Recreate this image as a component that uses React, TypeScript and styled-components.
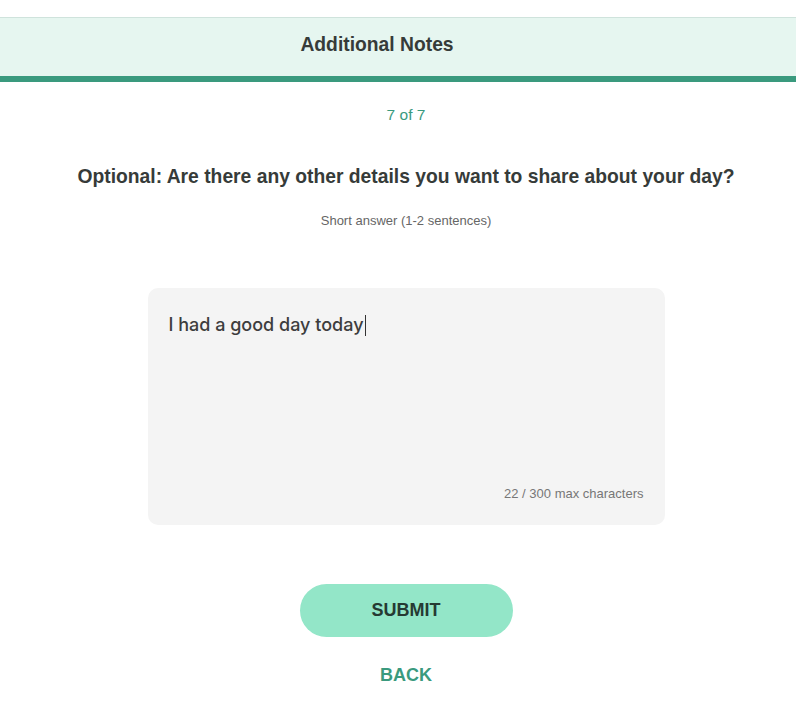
import React from "react";
import styled, { createGlobalStyle } from "styled-components";

const Global = createGlobalStyle`
  html, body { margin: 0; padding: 0; background: #ffffff; }
  body { font-family: "Liberation Sans", Arial, sans-serif; }
`;

const Page = styled.div`
  width: 796px;
  min-height: 714px;
  display: flex;
  flex-direction: column;
  padding-top: 17px;
  box-sizing: border-box;
`;

const Header = styled.header`
  height: 53px;
  background: #e6f6f0;
  border-top: 1px solid #cfe3dc;
  border-bottom: 6px solid #3a9a7e;
  display: flex;
  align-items: center;
  justify-content: center;
  padding: 0 42px 5px 0;
  box-sizing: content-box;
`;

const HeaderTitle = styled.h1`
  margin: 0;
  font-size: 19.3px;
  font-weight: 700;
  color: #363b39;
`;

const Content = styled.main`
  display: flex;
  flex-direction: column;
  align-items: center;
  padding-left: 16px;
`;

const Step = styled.div`
  margin-top: 24px;
  font-size: 15.5px;
  line-height: 18px;
  color: #3a9a7e;
`;

const Question = styled.h2`
  margin: 42px 0 0;
  font-size: 19.3px;
  line-height: 22px;
  font-weight: 700;
  color: #363b39;
`;

const Hint = styled.p`
  margin: 25px 0 0;
  font-size: 13px;
  line-height: 15px;
  color: #666;
`;

const Field = styled.div`
  margin-top: 60px;
  width: 517px;
  height: 237px;
  background: #f4f4f4;
  border-radius: 10px;
  box-sizing: border-box;
  padding: 26px 21px 24px;
  display: flex;
  flex-direction: column;
  justify-content: space-between;
`;

const Entry = styled.div`
  font-family: Inter, "Noto Sans", sans-serif;
  font-size: 18px;
  line-height: 22px;
  font-weight: 500;
  color: #3d3d3d;
  display: flex;
  align-items: center;
`;

const Caret = styled.span`
  display: inline-block;
  width: 1px;
  height: 21px;
  background: #333;
  margin-left: 1px;
`;

const Counter = styled.div`
  align-self: flex-end;
  font-size: 13px;
  line-height: 15px;
  color: #777;
`;

const SubmitButton = styled.button`
  margin-top: 59px;
  width: 213px;
  height: 53px;
  border: none;
  border-radius: 27px;
  background: #93e6c8;
  font-family: "Liberation Sans", Arial, sans-serif;
  font-size: 18px;
  font-weight: 700;
  color: #263a33;
`;

const BackButton = styled.button`
  margin-top: 28px;
  border: none;
  background: none;
  padding: 0;
  font-family: "Liberation Sans", Arial, sans-serif;
  font-size: 18px;
  line-height: 21px;
  font-weight: 700;
  color: #3a9a7e;
`;

export default function App() {
  return (
    <>
      <Global />
      <Page>
        <Header>
          <HeaderTitle>Additional Notes</HeaderTitle>
        </Header>
        <Content>
          <Step>7 of 7</Step>
          <Question>Optional: Are there any other details you want to share about your day?</Question>
          <Hint>Short answer (1-2 sentences)</Hint>
          <Field>
            <Entry>
              I had a good day today
              <Caret />
            </Entry>
            <Counter>22 / 300 max characters</Counter>
          </Field>
          <SubmitButton>SUBMIT</SubmitButton>
          <BackButton>BACK</BackButton>
        </Content>
      </Page>
    </>
  );
}
